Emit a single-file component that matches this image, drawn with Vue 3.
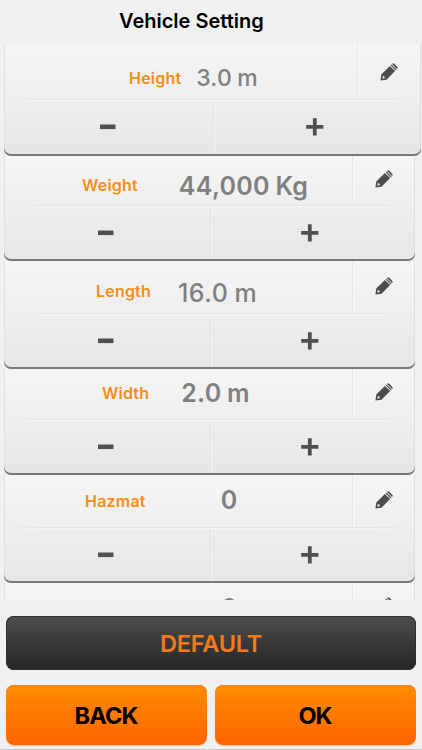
<script setup>
const rows = [
  { id: 'height', label: 'Height', value: '3.0 m' },
  { id: 'weight', label: 'Weight', value: '44,000 Kg' },
  { id: 'length', label: 'Length', value: '16.0 m' },
  { id: 'width', label: 'Width', value: '2.0 m' },
  { id: 'hazmat', label: 'Hazmat', value: '0' },
  { id: 'next', label: '', value: '0' },
]
</script>

<template>
  <main class="screen">
    <h1 class="title">Vehicle Setting</h1>
    <section class="list">
      <article v-for="row in rows" :key="row.id" class="card" :class="row.id">
        <div class="head">
          <div class="info">
            <span class="label">{{ row.label }}</span>
            <span class="value">{{ row.value }}</span>
          </div>
          <button class="edit" aria-label="Edit">
            <svg width="18" height="18" viewBox="0 0 18 18">
              <path fill="#4c4c4c" fill-rule="evenodd" d="M.4 17.6 1.3 11.5 9.9 2.9 15.1 8.1 6.5 16.7ZM2.4 15.8 4.9 15 4.3 13.4 2.9 13.1Z" />
              <path fill="#4c4c4c" d="m10.6 2.3.8-.8 5.1 5.1-.8.8ZM12.1 1l.2-.2q1-1 2 0l2.9 2.9q1 1 0 2l-.2.2Z" />
            </svg>
          </button>
        </div>
        <div class="steps">
          <button class="step" aria-label="Decrease">
            <svg width="18" height="18" viewBox="0 0 18 18"><path fill="#505050" d="M1 6.5h15.5v4.6H1z" /></svg>
          </button>
          <button class="step plus" aria-label="Increase">
            <svg width="18" height="18" viewBox="0 0 18 18"><path fill="#505050" d="M.2 6.9h6.7V.2h3.8v6.7h6.7v3.8h-6.7v6.7H6.9v-6.7H.2z" /></svg>
          </button>
        </div>
      </article>
    </section>
    <footer class="actions">
      <button class="btn default">DEFAULT</button>
      <div class="pair">
        <button class="btn">BACK</button>
        <button class="btn">OK</button>
      </div>
    </footer>
  </main>
</template>

<style>
body { background: #f0f0f0; }
</style>

<style scoped>
* { box-sizing: border-box; }
.screen {
  height: 750px;
  overflow: hidden;
  background: #f0f0f0;
  border-bottom: 1px solid #cbcbcb;
  font-family: Inter, "Liberation Sans", sans-serif;
}
button { border: 0; padding: 0; background: none; font-family: inherit; }
svg { display: block; }
.title {
  margin: 0;
  height: 44px;
  padding: 8px 0 0 119px;
  font-size: 20px;
  line-height: 26px;
  font-weight: 600;
  white-space: nowrap;
  color: #000;
}
.list { height: 556px; overflow: hidden; padding-left: 4px; }
.card {
  width: 411px;
  display: flex;
  flex-direction: column;
  padding: 0 1px 2px;
  border-radius: 0 0 7px 7px;
  background: linear-gradient(#f5f5f5, #e6e6e6);
  box-shadow: inset 0 -2px #797979, inset 1px 0 #dedede, inset -1px 0 #dedede;
}
.head {
  display: flex;
  flex: none;
  position: relative;
}
.head::after {
  content: "";
  position: absolute;
  left: 4px;
  right: 4px;
  bottom: -1px;
  height: 2px;
  background: linear-gradient(#e3e3e3 50%, #f4f4f4 50%);
  mask-image: linear-gradient(90deg, transparent, #000 8%, #000 92%, transparent);
}
.info { flex: 1; display: flex; align-items: flex-start; white-space: nowrap; }
.label {
  flex: none;
  font-size: 16px;
  line-height: 20px;
  font-weight: 600;
  letter-spacing: 0.2px;
  color: #f98d14;
}
.value {
  flex: none;
  font-size: 25px;
  line-height: 30px;
  font-weight: 600;
  letter-spacing: 0.3px;
  word-spacing: -1px;
  color: #808080;
}
.edit {
  width: 62px;
  flex: none;
  display: flex;
  align-items: flex-start;
  border-left: 1px solid #e5e5e5;
  box-shadow: inset 1px 0 #f9f9f9;
  padding-left: 22px;
}
.steps { flex: 1; display: flex; }
.step { flex: 1; display: flex; align-items: center; padding-left: 92px; }
.plus {
  padding-left: 90px;
  border-left: 1px solid #e2e2e2;
  box-shadow: inset 1px 0 #f3f3f3;
}
.height { width: 417px; height: 112px; }
.height .head { height: 56px; }
.height .label { margin: 24px 0 0 124px; }
.height .value { margin: 19px 0 0 15px; font-size: 23px; font-weight: 500; letter-spacing: 0.2px; }
.height .edit { width: 63px; padding-top: 19px; }
.height .step { padding-left: 94px; }
.height .plus { padding-left: 92px; }
.weight { height: 105px; }
.weight .head { height: 50px; }
.weight .label { margin: 19px 0 0 77px; }
.weight .value { margin: 15px 0 0 41px; }
.weight .edit { padding-top: 14px; }
.length { height: 108px; }
.length .head { height: 53px; }
.length .label { margin: 20px 0 0 91px; }
.length .value { margin: 17px 0 0 27px; font-weight: 500; letter-spacing: 0.5px; }
.length .edit { padding-top: 16px; }
.width { height: 106px; }
.width .head { height: 51px; }
.width .label { margin: 14px 0 0 97px; }
.width .value { margin: 9px 0 0 32px; }
.width .edit { padding-top: 14px; }
.hazmat { height: 108px; }
.hazmat .head { height: 53px; }
.hazmat .label { margin: 16px 0 0 80px; }
.hazmat .value { margin: 10px 0 0 75px; }
.hazmat .edit { padding-top: 16px; }
.next { height: 108px; }
.next .head { height: 53px; }
.next .value { margin: 10px 0 0 216px; }
.next .edit { padding-top: 14px; }
.actions { padding: 16px 6px 0; display: flex; flex-direction: column; gap: 15px; }
.pair { display: flex; gap: 8px; }
.btn {
  flex: 1;
  height: 60px;
  padding: 0 1px 0 0;
  border-radius: 8px;
  background: linear-gradient(#ff8c00, #ff6500);
  box-shadow: inset 0 1px #e9851d, 0 1px 1px #ffc49b;
  font-size: 23.5px;
  font-weight: 700;
  letter-spacing: -0.9px;
  color: #000;
}
.default {
  flex: none;
  height: 54px;
  padding: 0;
  background: linear-gradient(#4d4d4d, #262626);
  box-shadow: inset 0 0 0 1px #303030;
  font-weight: 600;
  letter-spacing: -0.2px;
  color: #f57a17;
}
</style>
